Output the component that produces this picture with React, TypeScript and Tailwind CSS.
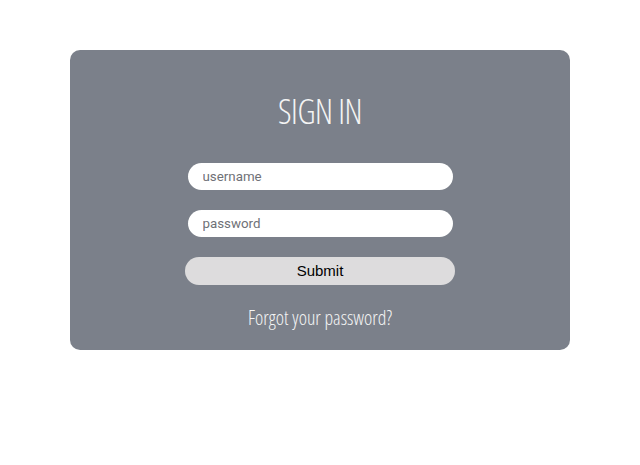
import React from "react";

const inputClass =
  "h-[27px] w-[265px] rounded-full bg-white px-[15px] font-['Roboto',sans-serif] text-[13.33px] text-gray-800 placeholder:text-[#6f7177] outline-none";

const App: React.FC = () => {
  return (
    <div className="min-h-[465px] w-full bg-white pt-[50px]">
      <div className="mx-auto flex h-[300px] w-[500px] flex-col items-center rounded-[10px] bg-[#7b808a] pt-[41px]">
        <h1 className="font-['Open_Sans',sans-serif] font-stretch-condensed text-[34px] leading-[40px] font-light tracking-[-0.5px] text-[#f4f4f4]">
          SIGN IN
        </h1>

        <form className="mt-[32px] flex flex-col items-center gap-[20px]">
          <input type="text" placeholder="username" className={inputClass} />
          <input type="password" placeholder="password" className={inputClass} />
          <button
            type="button"
            className="h-[28px] w-[270px] rounded-full bg-[#dddcdd] font-['Liberation_Sans',Arial,sans-serif] text-[15px] text-black"
          >
            Submit
          </button>
        </form>

        <a
          href="#"
          className="mt-[20px] font-['Open_Sans',sans-serif] font-stretch-condensed text-[19.7px] leading-[26px] font-light text-[#f4f4f4]"
        >
          Forgot your password?
        </a>
      </div>
    </div>
  );
};

export default App;
